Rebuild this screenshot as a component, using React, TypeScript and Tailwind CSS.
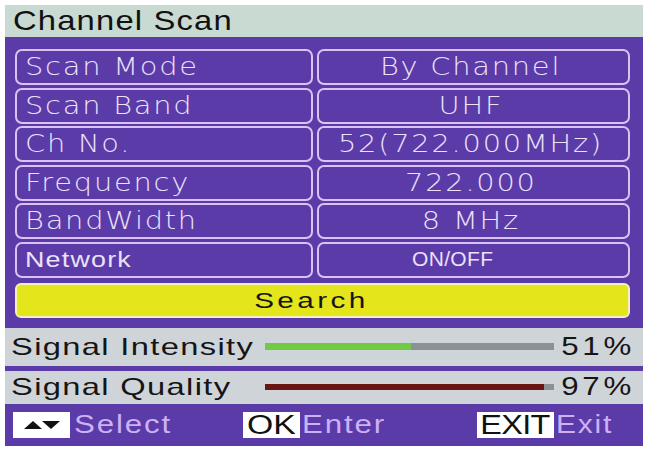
import React from 'react';

const rows = [
  { label: 'Scan Mode', value: 'By Channel' },
  { label: 'Scan Band', value: 'UHF' },
  { label: 'Ch No.', value: '52(722.000MHz)' },
  { label: 'Frequency', value: '722.000' },
  { label: 'BandWidth', value: '8 MHz' },
];

// the TV menu font is wide, so glyphs are stretched a bit sideways
const wideL = 'inline-block whitespace-nowrap origin-left';
const wideC = 'inline-block whitespace-nowrap origin-center';
const wideR = 'inline-block whitespace-nowrap origin-right';

function Row({ label, value, small }: { label: string; value: string; small?: boolean }) {
  return (
    <div className="flex h-[36px] gap-[4px]">
      <div
        className={`w-[298px] flex items-center pl-[8px] border-2 border-[#dcc2f2] rounded-[7px] text-[#ece0fa] ${
          small
            ? "text-[22px] font-['Liberation_Sans',sans-serif] tracking-[1px]"
            : 'text-[24px] font-extralight tracking-[1.5px]'
        }`}
      >
        <span className={`${wideL} ${small ? 'scale-x-[1.22]' : 'scale-x-[1.2]'}`}>{label}</span>
      </div>
      <div
        className={`flex-1 flex justify-center border-2 border-[#dcc2f2] rounded-[7px] text-[#ece0fa] ${
          small
            ? "items-start pr-[42px] text-[20px] font-['Liberation_Sans',sans-serif] tracking-[0.3px]"
            : 'items-center pr-[6px] text-[24px] font-extralight tracking-[1.5px]'
        }`}
      >
        <span className={`${wideC} ${small ? 'scale-x-[1.05]' : 'scale-x-[1.2]'}`}>{value}</span>
      </div>
    </div>
  );
}

export default function App() {
  return (
    <div className="w-[649px] h-[450px] bg-white pt-[5px] pl-[5px] font-['DejaVu_Sans',sans-serif]">
      <div className="w-[638px] h-[441px] bg-[#5a3ba8] flex flex-col">
        <div className="h-[32px] bg-[#c8dad2] flex items-center pl-[8px] text-[28px] leading-none text-[#111] font-['Liberation_Sans',sans-serif] tracking-[1px]">
          <span className={`${wideL} scale-x-[1.17]`}>Channel Scan</span>
        </div>
        <div className="pl-[10px] pr-[13px] pt-[12px] flex flex-col gap-[2.5px]">
          {rows.map((r) => (
            <Row key={r.label} label={r.label} value={r.value} />
          ))}
          <Row label="Network" value="ON/OFF" small />
        </div>
        <div className="pl-[10px] pr-[13px] pt-[5px]">
          <div className="h-[35px] bg-[#e5e51c] border-2 border-[#f3efc0] rounded-[6px] flex items-center justify-center pr-[22px] text-[22px] text-[#151515] font-['Liberation_Sans',sans-serif] tracking-[2.5px]">
            <span className={`${wideC} scale-x-[1.35]`}>Search</span>
          </div>
        </div>
        <div className="mt-[10px] h-[38px] bg-[#cfd4d8] flex items-center pl-[6px] pr-[8px] text-[24px] text-[#151515] font-['Liberation_Sans',sans-serif] tracking-[1px]">
          <span className="w-[254px]">
            <span className={`${wideL} scale-x-[1.36]`}>Signal Intensity</span>
          </span>
          <div className="w-[289px] h-[7px] bg-[#8b9296] flex">
            <div className="w-[146px] h-full bg-[#6fcb43]" />
          </div>
          <span className="flex-1 text-right text-[25px] tracking-[3px]">
            <span className={`${wideR} scale-x-[1.25]`}>51%</span>
          </span>
        </div>
        <div className="mt-[5px] h-[33px] bg-[#cfd4d8] flex items-center pl-[6px] pr-[8px] text-[24px] text-[#151515] font-['Liberation_Sans',sans-serif] tracking-[1px]">
          <span className="w-[254px]">
            <span className={`${wideL} scale-x-[1.36]`}>Signal Quality</span>
          </span>
          <div className="w-[289px] h-[6px] bg-[#8b9296] flex">
            <div className="w-[279px] h-full bg-[#6a1414]" />
          </div>
          <span className="flex-1 text-right text-[25px] tracking-[3px]">
            <span className={`${wideR} scale-x-[1.25]`}>97%</span>
          </span>
        </div>
        <div className="flex-1 flex items-center pl-[8px] text-[25px] text-[#cdb0f6] font-['Liberation_Sans',sans-serif] tracking-[1.5px]">
          <div className="w-[230px] flex items-center">
            <span className="w-[57px] h-[26px] bg-white flex items-center justify-center">
              <svg width="36" height="10" viewBox="0 0 36 10">
                <polygon points="0,9 9,1 18,9" fill="#111" />
                <polygon points="18,1 36,1 27,9" fill="#111" />
              </svg>
            </span>
            <span className="ml-[4px]">
              <span className={`${wideL} scale-x-[1.25]`}>Select</span>
            </span>
          </div>
          <div className="w-[234px] flex items-center">
            <span className="w-[57px] h-[26px] bg-white text-[#111] text-[27px] flex items-center justify-center tracking-normal">
              <span className={`${wideC} scale-x-[1.25]`}>OK</span>
            </span>
            <span className="ml-[2px]">
              <span className={`${wideL} scale-x-[1.25]`}>Enter</span>
            </span>
          </div>
          <div className="flex items-center">
            <span className="w-[77px] h-[26px] bg-white text-[#111] text-[27px] flex items-center justify-center tracking-[-0.5px]">
              <span className={`${wideC} scale-x-[1.2]`}>EXIT</span>
            </span>
            <span className="ml-[2px]">
              <span className={`${wideL} scale-x-[1.2]`}>Exit</span>
            </span>
          </div>
        </div>
      </div>
    </div>
  );
}
